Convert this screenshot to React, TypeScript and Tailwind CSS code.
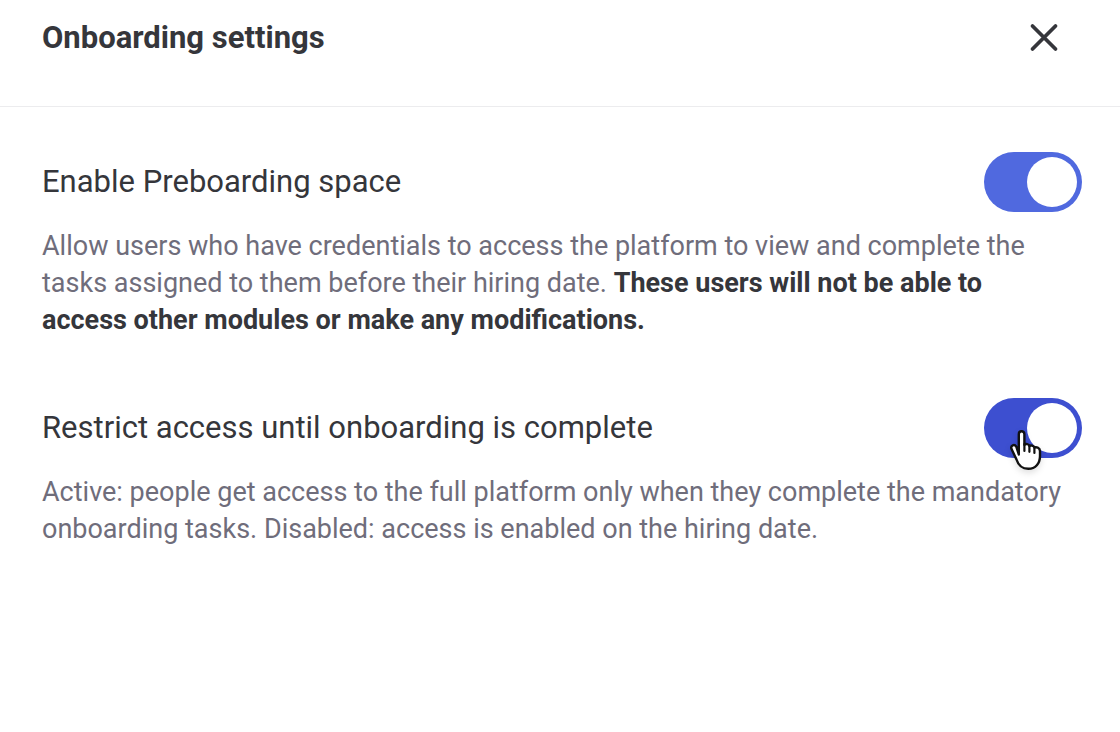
import { useState } from "react";
import type { ReactNode } from "react";

interface SettingToggleProps {
  id: string;
  label: string;
  checked: boolean;
  onChange: (checked: boolean) => void;
  trackColor: string;
  pointer?: ReactNode;
  children: ReactNode;
}

function HandPointer() {
  return (
    <svg
      className="pointer-events-none absolute left-6 top-[30px] h-12 w-9 drop-shadow-md"
      viewBox="0 0 36 48"
      fill="none"
      strokeLinecap="round"
      strokeLinejoin="round"
      aria-hidden="true"
    >
      <path
        d="M10.800 26.500V6.200c0-4 5.600-4 5.600 0v10.600c1.400-1.300 4.400-.8 5 1.200 1.500-1 4.400-.4 5 1.500 2.200-.8 5.600.4 5.600 3.800v4.700c0 7.500-4.600 12.800-11.700 12.800-6 0-10-3.600-11.800-9.300L3.400 20.800c-1-3.600 3-5 4.900-2.200z"
        fill="#fff"
        stroke="#111"
        strokeWidth="2.400"
      />
      <path d="M16.400 16v7M21.400 17.800v6M26.400 19.500v5.500" stroke="#111" strokeWidth="2.200" />
    </svg>
  );
}

function SettingToggle({ id, label, checked, onChange, trackColor, pointer, children }: SettingToggleProps) {
  return (
    <section>
      <div className="flex items-center justify-between">
        <label htmlFor={id} className="text-[31px] leading-10 text-[#35363b]">
          {label}
        </label>
        <div className="relative flex shrink-0">
          <input
            id={id}
            type="checkbox"
            role="switch"
            checked={checked}
            onChange={(e) => onChange(e.target.checked)}
            className={`h-[60px] w-[98px] cursor-pointer appearance-none rounded-full ${
              checked ? trackColor : "bg-gray-300"
            }`}
          />
          <span
            className={`pointer-events-none absolute top-[5px] size-[50px] rounded-full bg-white ${
              checked ? "right-[5px]" : "left-[5px]"
            }`}
          />
          {pointer}
        </div>
      </div>
      <p className="mt-4 pr-4 text-[27px] leading-[37px] text-[#6f6d7b]">{children}</p>
    </section>
  );
}

export default function App() {
  const [preboarding, setPreboarding] = useState(true);
  const [restricted, setRestricted] = useState(true);

  return (
    <div className="min-h-screen bg-white font-[Roboto,sans-serif]">
      <header className="flex items-center justify-between border-b border-[#ececee] pb-12 pl-[42px] pr-[58px] pt-[18px]">
        <h1 className="text-[31px] font-bold leading-10 text-[#35363b]">Onboarding settings</h1>
        <button type="button" aria-label="Close">
          <svg className="size-9" viewBox="0 0 36 36" aria-hidden="true">
            <path d="M6.500 6l23 23M29.500 6l-23 23" stroke="#35363b" strokeWidth="3.800" strokeLinecap="round" />
          </svg>
        </button>
      </header>
      <main className="flex flex-col gap-[59px] py-[45px] pl-[42px] pr-[38px]">
        <SettingToggle
          id="preboarding"
          label="Enable Preboarding space"
          checked={preboarding}
          onChange={setPreboarding}
          trackColor="bg-[#5069df]"
        >
          Allow users who have credentials to access the platform to view and complete the tasks assigned to them
          before their hiring date.{" "}
          <strong className="font-bold text-[#35363b]">
            These users will not be able to access other modules or make any modifications.
          </strong>
        </SettingToggle>
        <SettingToggle
          id="restrict"
          label="Restrict access until onboarding is complete"
          checked={restricted}
          onChange={setRestricted}
          trackColor="bg-[#3d4fd0]"
          pointer={<HandPointer />}
        >
          Active: people get access to the full platform only when they complete the mandatory onboarding tasks.
          Disabled: access is enabled on the hiring date.
        </SettingToggle>
      </main>
    </div>
  );
}
